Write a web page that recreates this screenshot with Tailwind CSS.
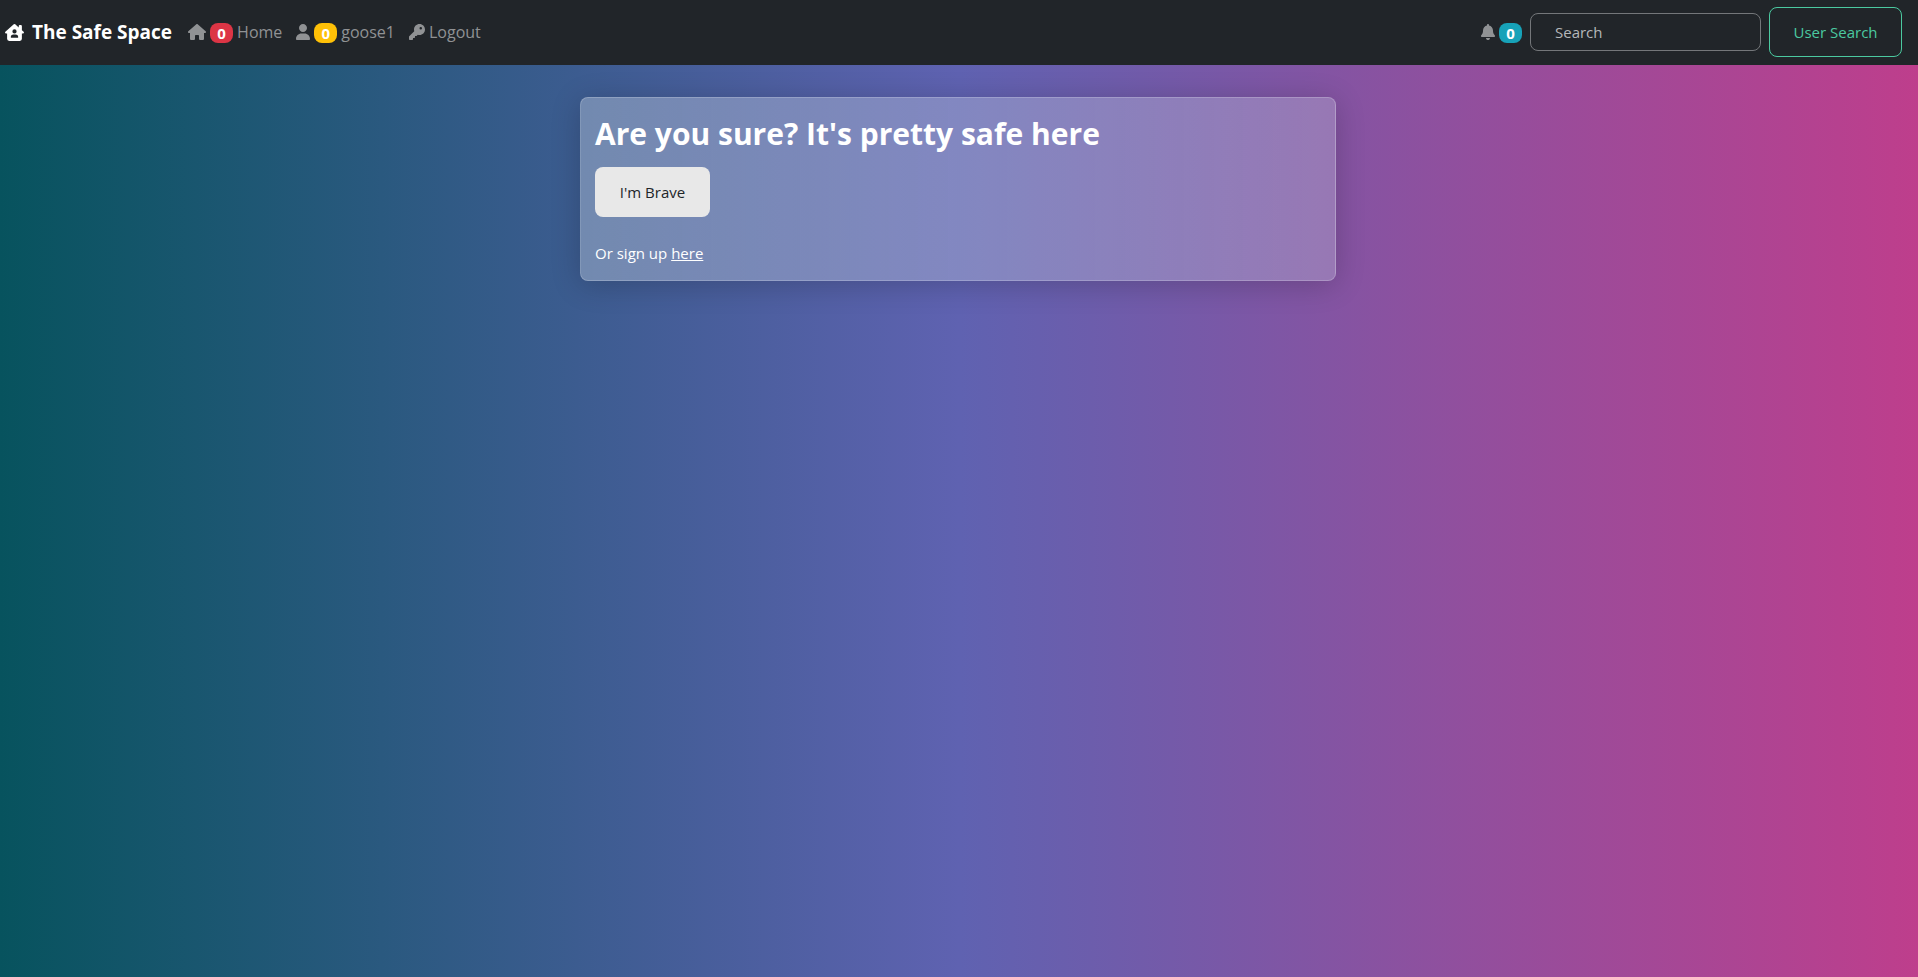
<!DOCTYPE html>
<html lang="en">
<head>
<meta charset="utf-8">
<meta name="viewport" content="width=device-width, initial-scale=1">
<title>The Safe Space</title>
<script src="https://cdn.jsdelivr.net/npm/@tailwindcss/browser@4"></script>
</head>
<body class="min-h-screen bg-linear-to-r/srgb from-[#07535e] via-[#5f62b1] to-[#be3e8c] font-['Open_Sans','Noto_Sans',sans-serif] text-[15px] leading-6 text-white">
<nav class="flex h-[65px] items-center bg-[#212529] pr-4 pb-px pl-[5px]">
  <a href="#" class="mr-4 flex items-center gap-2 text-[19px] font-bold">
    <svg class="h-[17px] w-[19px]" viewBox="0 0 576 512" fill="currentColor" fill-rule="evenodd" aria-hidden="true"><path d="M266 8Q288-9 310 8L416 101V64Q416 32 448 32H480Q512 32 512 64V185L565 231Q576 242 576 256Q573 288 544 288H512V448Q512 512 448 512H128Q64 512 64 448V288H32Q3 288 0 256Q0 242 11 231ZM288 160A64 64 0 1 0 288 288A64 64 0 1 0 288 160ZM256 320Q176 324 176 400Q178 416 192 416H384Q398 416 400 400Q400 324 320 320Z"/></svg>
    The Safe Space
  </a>
  <div class="flex items-center gap-[14px] text-base text-[#909294]">
    <a href="#" class="flex items-center gap-1">
      <svg class="h-4 w-[18px]" viewBox="0 0 576 512" fill="currentColor" aria-hidden="true"><path d="M575.8 255.5C575.8 273.5 560.8 287.6 543.8 287.6H511.8L512.5 447.7C512.5 450.5 512.3 453.1 512 455.8V472C512 494.1 494.1 512 472 512H392C369.9 512 352 494.1 352 472V384C352 366.3 337.7 352 320 352H256C238.3 352 224 366.3 224 384V472C224 494.1 206.1 512 184 512H104C81.9 512 64 494.1 64 472V287.6H32C14 287.6 0 273.5 0 255.5C0 246.5 3 238.5 10 231.5L266.4 8C273.4 1 281.4 0 288.4 0C295.4 0 303.4 2 309.5 7L564.8 231.5C572.8 238.5 576.9 246.5 575.8 255.5z"/></svg>
      <span class="mt-0.5 flex h-5 w-[23px] items-center justify-center rounded-lg bg-[#dc3545] text-[15px] font-bold text-white">0</span>
      Home
    </a>
    <a href="#" class="flex items-center gap-1">
      <svg class="h-4 w-[14px]" viewBox="0 0 448 512" fill="currentColor" aria-hidden="true"><path d="M224 256c70.7 0 128-57.3 128-128S294.7 0 224 0 96 57.3 96 128s57.3 128 128 128zM274.7 304H173.3C77.6 304 0 381.6 0 477.3c0 19.1 15.5 34.7 34.7 34.7h378.6c19.2 0 34.7-15.5 34.7-34.7C448 381.6 370.4 304 274.7 304z"/></svg>
      <span class="mt-0.5 flex h-5 w-[23px] items-center justify-center rounded-lg bg-[#ffc107] text-[15px] font-bold text-white">0</span>
      goose1
    </a>
    <a href="#" class="flex items-center gap-1">
      <svg class="size-4" viewBox="0 0 512 512" fill="currentColor" aria-hidden="true"><path d="M336 352c97.2 0 176-78.8 176-176S433.2 0 336 0S160 78.8 160 176c0 18.7 2.9 36.8 8.3 53.7L7 391c-4.5 4.5-7 10.6-7 17v80c0 13.3 10.7 24 24 24h80c13.3 0 24-10.7 24-24V448h40c13.3 0 24-10.7 24-24V384h40c6.4 0 12.5-2.5 17-7l33.3-33.3c16.9 5.4 35 8.3 53.7 8.3zM376 96a40 40 0 1 1 0 80 40 40 0 1 1 0-80z"/></svg>
      Logout
    </a>
  </div>
  <form class="ml-auto flex items-center gap-2">
    <a href="#" aria-label="Notifications" class="flex items-center gap-1 text-[#909294]">
      <svg class="h-4 w-[14px]" viewBox="0 0 448 512" fill="currentColor" aria-hidden="true"><path d="M224 0c-17.7 0-32 14.3-32 32V51.2C119 66 64 130.6 64 208v18.8c0 47-17.3 92.4-48.5 127.6l-7.4 8.3c-8.4 9.4-10.4 22.9-5.3 34.4S19.4 416 32 416H416c12.6 0 24-7.4 29.2-18.9s3.1-25-5.3-34.4l-7.4-8.3C401.3 319.2 384 273.9 384 226.8V208c0-77.4-55-142-128-156.8V32c0-17.7-14.3-32-32-32zm45.3 493.3c12-12 18.7-28.3 18.7-45.3H224 160c0 17 6.7 33.3 18.7 45.3s28.3 18.7 45.3 18.7s33.3-6.7 45.3-18.7z"/></svg>
      <span class="mt-0.5 flex h-5 w-[23px] items-center justify-center rounded-lg bg-[#17a2b8] text-[15px] font-bold text-white">0</span>
    </a>
    <input type="search" aria-label="Search" placeholder="Search" class="h-[38px] w-[231px] rounded-lg border border-[#74777a] bg-transparent px-6 text-white placeholder:text-[#b5b7b9]">
    <button type="submit" class="h-[50px] w-[133px] rounded-lg border border-[#4bc9a0] text-[#4bc9a0]">User Search</button>
  </form>
</nav>
<main class="pt-8 pr-[18px] pl-4">
  <section class="mx-auto w-full max-w-[756px] rounded-lg border border-white/20 bg-linear-to-r from-[#cbd5e3]/38 to-[#cbd5e3]/28 px-[14px] pt-4 pb-[15px] shadow-[0_4px_30px_rgba(0,0,0,0.2)]">
    <h1 class="mb-[13px] text-3xl leading-10 font-bold">Are you sure? It's pretty safe here</h1>
    <button type="button" class="h-[50px] w-[115px] rounded-lg bg-[#e8e8e8] text-[#212529]">I'm Brave</button>
    <p class="mt-6">Or sign up <a href="#" class="underline">here</a></p>
  </section>
</main>
</body>
</html>
